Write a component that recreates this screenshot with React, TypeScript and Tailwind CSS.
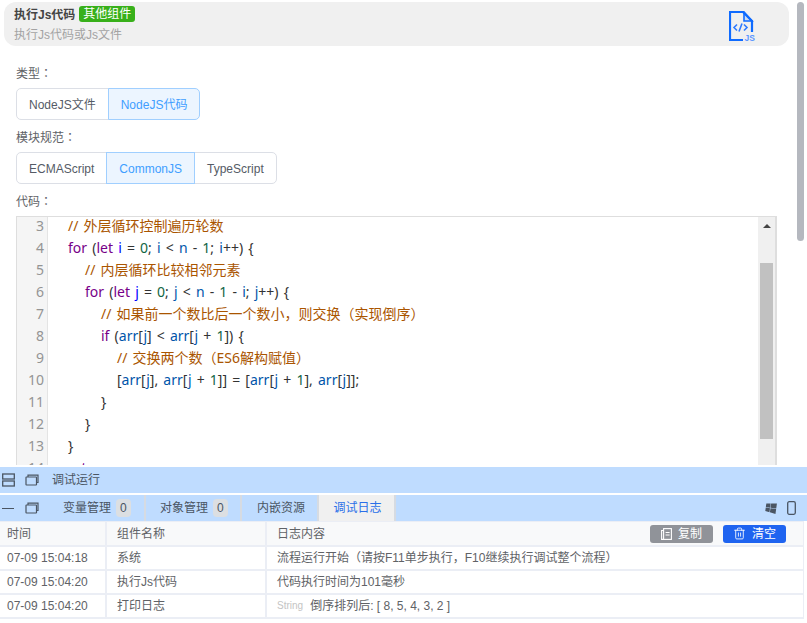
import {Trash2} from "lucide-react";
import {FaWindows} from "react-icons/fa";

type Tok = [string, string?];

const KW = "text-[#770088]";
const DEF = "text-[#0000ff]";
const VAR = "text-[#0055aa]";
const NUM = "text-[#116644]";
const COM = "text-[#aa5500]";

const codeLines: { n: number; level: number; toks: Tok[] }[] = [
    {n: 3, level: 1, toks: [["// 外层循环控制遍历轮数", COM]]},
    {
        n: 4, level: 1, toks: [["for", KW], [" ("], ["let", KW], [" "], ["i", DEF], [" = "], ["0", NUM], ["; "], ["i", VAR], [" < "], ["n", VAR], [" - "], ["1", NUM], ["; "], ["i", VAR], ["++) {"]],
    },
    {n: 5, level: 2, toks: [["// 内层循环比较相邻元素", COM]]},
    {
        n: 6, level: 2, toks: [["for", KW], [" ("], ["let", KW], [" "], ["j", DEF], [" = "], ["0", NUM], ["; "], ["j", VAR], [" < "], ["n", VAR], [" - "], ["1", NUM], [" - "], ["i", VAR], ["; "], ["j", VAR], ["++) {"]],
    },
    {n: 7, level: 3, toks: [["// 如果前一个数比后一个数小，则交换（实现倒序）", COM]]},
    {
        n: 8, level: 3, toks: [["if", KW], [" ("], ["arr", VAR], ["["], ["j", VAR], ["] < "], ["arr", VAR], ["["], ["j", VAR], [" + "], ["1", NUM], ["]) {"]],
    },
    {n: 9, level: 4, toks: [["// 交换两个数（ES6解构赋值）", COM]]},
    {
        n: 10, level: 4, toks: [["["], ["arr", VAR], ["["], ["j", VAR], ["], "], ["arr", VAR], ["["], ["j", VAR], [" + "], ["1", NUM], ["]] = ["], ["arr", VAR], ["["], ["j", VAR], [" + "], ["1", NUM], ["], "], ["arr", VAR], ["["], ["j", VAR], ["]];"]],
    },
    {n: 11, level: 3, toks: [["}"]]},
    {n: 12, level: 2, toks: [["}"]]},
    {n: 13, level: 1, toks: [["}"]]},
    {n: 14, level: 1, toks: [["return", KW], [" "], ["arr", VAR], [";"]]},
];

const logs = [
    {time: "07-09 15:04:18", name: "系统", text: "流程运行开始（请按F11单步执行，F10继续执行调试整个流程）"},
    {time: "07-09 15:04:20", name: "执行Js代码", text: "代码执行时间为101毫秒"},
    {time: "07-09 15:04:20", name: "打印日志", tag: "String", text: "倒序排列后: [ 8, 5, 4, 3, 2 ]"},
];

function WindowIcon() {
    return (
        <svg width="14" height="12" viewBox="0 0 14 12" fill="none" stroke="#4a5563" strokeWidth="1.2">
            <rect x="1" y="3" width="10.5" height="8" rx="0.5"/>
            <path d="M3 3V1.2h10V8.5h-1.5"/>
        </svg>
    );
}

function Label({text}: { text: string }) {
    return (
        <div className="h-4 leading-4">
            {text}
            <span className="font-['Noto_Sans_CJK_TC',sans-serif]">：</span>
        </div>
    );
}

function Segmented({items, active}: { items: string[]; active: string }) {
    return (
        <div className="flex h-8 w-fit text-xs">
            {items.map((item, i) => (
                <div
                    key={item}
                    className={
                        "flex items-center justify-center border px-3 pt-0.5 " +
                        (i === 0 ? "rounded-l-[5px] " : "-ml-px ") +
                        (i === items.length - 1 ? "rounded-r-[5px] " : "") +
                        (item === active
                            ? "relative border-[#a0cfff] bg-[#ecf5ff] text-[#409eff]"
                            : "border-[#dcdfe6] bg-white text-[#555b66]")
                    }
                >
                    {item}
                </div>
            ))}
        </div>
    );
}

export default function App() {
    return (
        <div className="relative flex h-[623px] w-[807px] flex-col overflow-hidden bg-white font-['Liberation_Sans','Noto_Sans_CJK_SC',sans-serif] text-xs text-[#606266]">
            <div className="h-[467px] shrink-0 overflow-hidden">
                <div className="mx-1 mt-0.5 flex h-11 w-[785px] items-start justify-between rounded-xl bg-[#f0f0f0] pl-2.5 pr-[32px]">
                    <div>
                        <div className="mt-1 flex h-4 items-center">
                            <span className="mt-0.5 font-bold text-[#444]">执行Js代码</span>
                            <span className="ml-1 rounded-[3px] bg-[#38b01a] px-1 leading-4 text-white">其他组件</span>
                        </div>
                        <div className="mt-[5px] text-[#a3a3a3]">执行Js代码或Js文件</div>
                    </div>
                    <svg className="mt-[9px]" width="28" height="31" viewBox="0 0 28 31" fill="none">
                        <path d="M14 30H1V2h13l9 9v11" stroke="#0f6bff" strokeWidth="2.2" transform="translate(0 -1)"/>
                        <path d="M15 1v9h8z" fill="#0f6bff" fillOpacity="0.15" stroke="#0f6bff" strokeWidth="1.6"/>
                        <path d="M8 13.5 5 16.5l3 3M15 13.5l3 3-3 3M13 12.5l-3 8" stroke="#2f7bff" strokeWidth="1.6"/>
                        <text x="15.5" y="30" fontSize="8.5" fontWeight="700" fill="#5c97ff">JS</text>
                    </svg>
                </div>

                <div className="px-4">
                    <div className="mt-[19px]"><Label text="类型"/></div>
                    <div className="mt-[7px]"><Segmented items={["NodeJS文件", "NodeJS代码"]} active="NodeJS代码"/></div>
                    <div className="mt-[9px]"><Label text="模块规范"/></div>
                    <div className="mt-[7px]"><Segmented items={["ECMAScript", "CommonJS", "TypeScript"]} active="CommonJS"/></div>
                    <div className="mt-[9px]"><Label text="代码"/></div>

                    <div className="mt-[7px] flex h-[249px] w-[761px] overflow-hidden border-r-2 border-t border-l border-[#dedede]">
                        <div className="w-[30px] shrink-0 bg-[#f5f5f5] pr-[3px] text-right font-['Noto_Sans','Noto_Sans_CJK_SC',sans-serif] text-sm text-[#949494]">
                            {codeLines.map((l) => (
                                <div key={l.n} className="h-[22px] leading-[18px]">{l.n}</div>
                            ))}
                        </div>
                        <div className="min-w-0 flex-1 whitespace-pre border-l border-[#e4e4e4] font-['Noto_Sans','Noto_Sans_CJK_SC',sans-serif] text-sm text-[#333] [word-spacing:1.5px]">
                            {codeLines.map((l) => (
                                <div key={l.n} className="flex h-[22px] leading-[18px]">
                                    <div className={l.level === 1 ? "w-5" : l.level === 2 ? "w-[37px]" : l.level === 3 ? "w-[53px]" : "w-[69px]"}/>
                                    <div>
                                        {l.toks.map((t, i) => (
                                            <span key={i} className={t[1]}>{t[0]}</span>
                                        ))}
                                    </div>
                                </div>
                            ))}
                        </div>
                        <div className="flex w-[17px] shrink-0 flex-col items-center bg-[#f0f0f0]">
                            <div className="mt-[7px] h-0 w-0 border-x-4 border-b-4 border-x-transparent border-b-[#444]"/>
                            <div className="mt-[35px] h-[176px] w-[13px] bg-[#c1c1c1]"/>
                        </div>
                    </div>
                </div>
            </div>

            <div className="flex h-[26px] shrink-0 items-center bg-[#bfdcff] pl-0.5 text-[#4a5563]">
                <svg width="13" height="14" viewBox="0 0 13 14" fill="none" stroke="#4a5563" strokeWidth="1.3">
                    <rect x="0.7" y="1" width="11.6" height="5"/>
                    <rect x="0.7" y="8" width="11.6" height="5"/>
                </svg>
                <div className="ml-2.5 flex"><WindowIcon/></div>
                <span className="ml-[13px]">调试运行</span>
            </div>

            <div className="mt-0.5 flex h-[26px] shrink-0 items-stretch bg-[#bfdcff] pl-0.5 pr-[11px] text-[#4a5563]">
                <div className="flex w-[13px] items-center"><div className="h-px w-3 bg-[#4a5563]"/></div>
                <div className="ml-2.5 flex items-center"><WindowIcon/></div>
                <div className="ml-6 flex w-[83px] items-center border-r-2 border-[#d6dbe2]">
                    变量管理
                    <span className="ml-[5px] rounded bg-[#dcdfe2] px-1 leading-[18px]">0</span>
                </div>
                <div className="flex w-[96px] items-center border-r-2 border-[#d6dbe2] pl-[14px]">
                    对象管理
                    <span className="ml-[5px] rounded bg-[#dcdfe2] px-1 leading-[18px]">0</span>
                </div>
                <div className="flex w-[77px] items-center border-r-2 border-[#d6dbe2] pl-[15px]">内嵌资源</div>
                <div className="flex w-[77px] items-center justify-center border-r-2 border-[#d6dbe2] bg-[#f0f0f0] pl-0.5 text-[#2a6fe8]">调试日志</div>
                <div className="ml-auto flex items-center gap-2.5">
                    <FaWindows className="h-3 w-3 rotate-[8deg] text-[#4a5563]"/>
                    <svg width="9" height="14" viewBox="0 0 9 14" fill="none" stroke="#4a5563" strokeWidth="1.3">
                        <rect x="0.7" y="0.7" width="7.6" height="12.6" rx="1.5"/>
                    </svg>
                </div>
            </div>

            <div className="w-[804px] border-r border-[#ebeef5]">
                <div className="flex h-[26px] items-center border-b-2 border-t border-[#ebeef5] bg-[#f8f9fa] text-[#606266]">
                    <div className="flex h-full w-[107px] items-center border-r-2 border-[#ebeef5] pl-[7px]">时间</div>
                    <div className="flex h-full w-[160px] items-center border-r-2 border-[#ebeef5] pl-[10px]">组件名称</div>
                    <div className="flex flex-1 items-center pl-[10px]">日志内容</div>
                    <div className="flex h-[18px] w-[63px] items-center justify-center gap-1.5 rounded-[3px] bg-[#909399] text-white">
                        <svg width="11" height="12" viewBox="0 0 11 12" fill="none" stroke="#fff" strokeWidth="1.1">
                            <rect x="2.6" y="0.6" width="7.8" height="10.8"/>
                            <path d="M2.6 2.5H.6v8.9h2M4.6 4.5h4M4.6 7h4"/>
                        </svg>
                        复制
                    </div>
                    <div className="ml-2.5 mr-[17px] flex h-[18px] w-[63px] items-center justify-center gap-1.5 rounded-[3px] bg-[#1f64f0] text-white">
                        <Trash2 size={13} strokeWidth={1.6}/>
                        清空
                    </div>
                </div>
                {logs.map((row, i) => (
                    <div key={i} className="flex h-6 items-center border-b-2 border-[#ebeef5] text-[#606266]">
                        <div className="flex h-full w-[107px] items-center border-r-2 border-[#ebeef5] pl-[7px]">{row.time}</div>
                        <div className="flex h-full w-[160px] items-center border-r-2 border-[#ebeef5] pl-[10px]">{row.name}</div>
                        <div className="flex flex-1 items-center pl-[10px]">
                            {row.tag && <span className="mr-[7px] text-[10px] text-[#c4c4c4]">{row.tag}</span>}
                            {row.text}
                        </div>
                    </div>
                ))}
            </div>

            <div className="absolute right-[3px] top-0.5 h-[239px] w-[7px] rounded bg-[#b5b8bf]"/>
        </div>
    );
}
